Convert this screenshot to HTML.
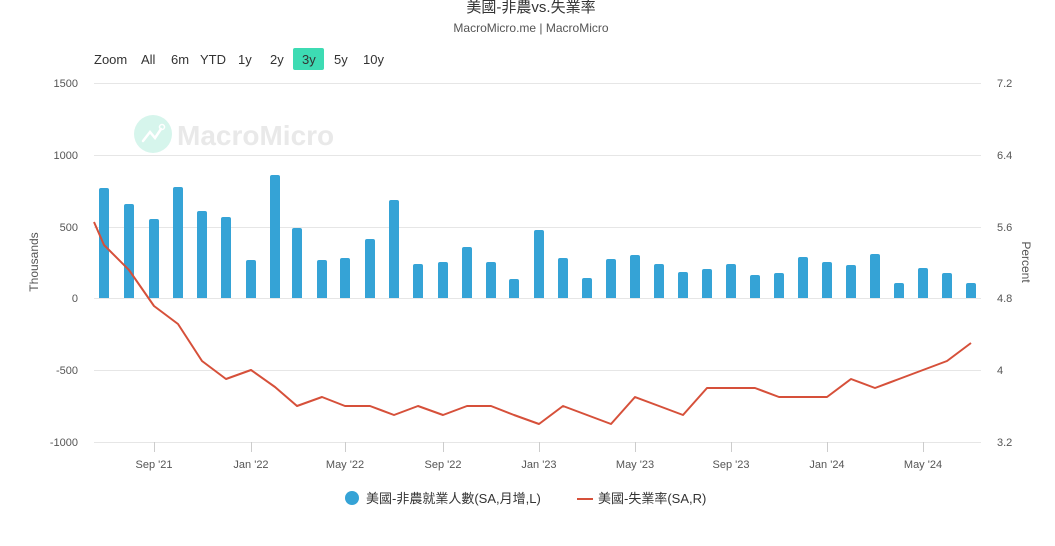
<!DOCTYPE html>
<html><head><meta charset="utf-8"><style>
html,body{margin:0;padding:0;background:#fff;width:1055px;height:546px;overflow:hidden}
svg{display:block;font-family:"Liberation Sans","Noto Sans CJK TC",sans-serif}
</style></head><body>
<svg width="1055" height="546" viewBox="0 0 1055 546" xmlns="http://www.w3.org/2000/svg">
<text x="531" y="12" text-anchor="middle" font-size="15" fill="#333">美國-非農vs.失業率</text>
<text x="531" y="32" text-anchor="middle" font-size="12" fill="#555">MacroMicro.me | MacroMicro</text>
<g font-size="13" fill="#333">
<text x="94" y="64">Zoom</text>
<text x="141" y="64">All</text>
<text x="171" y="64">6m</text>
<text x="200" y="64">YTD</text>
<text x="238" y="64">1y</text>
<text x="270" y="64">2y</text>
<rect x="293" y="48" width="31" height="22" rx="2" fill="#3ddbb3"/>
<text x="302" y="64">3y</text>
<text x="334" y="64">5y</text>
<text x="363" y="64">10y</text>
</g>
<g stroke="#e6e6e6" stroke-width="1">
<line x1="94" x2="981" y1="83.5" y2="83.5"/>
<line x1="94" x2="981" y1="155.5" y2="155.5"/>
<line x1="94" x2="981" y1="227.5" y2="227.5"/>
<line x1="94" x2="981" y1="298.5" y2="298.5"/>
<line x1="94" x2="981" y1="370.5" y2="370.5"/>
<line x1="94" x2="981" y1="442.5" y2="442.5"/>
</g>
<g stroke="#ccc">
<line x1="154.5" x2="154.5" y1="442" y2="452"/><line x1="251.5" x2="251.5" y1="442" y2="452"/>
<line x1="345.5" x2="345.5" y1="442" y2="452"/><line x1="443.5" x2="443.5" y1="442" y2="452"/>
<line x1="539.5" x2="539.5" y1="442" y2="452"/><line x1="635.5" x2="635.5" y1="442" y2="452"/>
<line x1="731.5" x2="731.5" y1="442" y2="452"/><line x1="827.5" x2="827.5" y1="442" y2="452"/>
<line x1="923.5" x2="923.5" y1="442" y2="452"/>
</g>
<circle cx="153" cy="134" r="19" fill="#d6f5ec"/>
<path d="M143 141 L150 132 L155 138 L161 129" stroke="#fff" stroke-width="2.5" fill="none" stroke-linecap="round"/>
<circle cx="162" cy="127" r="2.5" fill="none" stroke="#fff" stroke-width="1.5"/>
<text x="177" y="145" font-size="28" font-weight="bold" fill="#e9e9e9">MacroMicro</text>
<g id="bars" fill="#35a3d6"></g>
<g font-size="11" fill="#555" text-anchor="end">
<text x="78" y="87">1500</text><text x="78" y="159">1000</text><text x="78" y="231">500</text>
<text x="78" y="302">0</text><text x="78" y="374">-500</text><text x="78" y="446">-1000</text>
</g>
<g font-size="11" fill="#555">
<text x="997" y="87">7.2</text><text x="997" y="159">6.4</text><text x="997" y="231">5.6</text>
<text x="997" y="302">4.8</text><text x="997" y="374">4</text><text x="997" y="446">3.2</text>
</g>
<text transform="translate(38,262) rotate(-90)" text-anchor="middle" font-size="12" fill="#555">Thousands</text>
<text transform="translate(1022,262) rotate(90)" text-anchor="middle" font-size="12" fill="#555">Percent</text>
<g font-size="11" fill="#555" text-anchor="middle">
<text x="154" y="468">Sep '21</text><text x="251" y="468">Jan '22</text><text x="345" y="468">May '22</text>
<text x="443" y="468">Sep '22</text><text x="539" y="468">Jan '23</text><text x="635" y="468">May '23</text>
<text x="731" y="468">Sep '23</text><text x="827" y="468">Jan '24</text><text x="923" y="468">May '24</text>
</g>
<polyline fill="none" stroke="#d6503a" stroke-width="2" stroke-linejoin="round" points="94,222 104,245 129,270 154,306 178,324 202,361 226,379 251,370 275,387 297,406 322,397 345,406 370,406 394,415 418,406 443,415 467,406 491,406 514,415 539,424 563,406 587,415 611,424 635,397 659,406 683,415 707,388 731,388 755,388 779,397 803,397 827,397 851,379 875,388 899,379 923,370 947,361 971,343"/>
<circle cx="352" cy="498" r="7" fill="#35a3d6"/>
<text x="366" y="503" font-size="13" fill="#333">美國-非農就業人數(SA,月增,L)</text>
<line x1="577" x2="593" y1="499" y2="499" stroke="#d6503a" stroke-width="2"/>
<text x="598" y="503" font-size="13" fill="#333">美國-失業率(SA,R)</text>
</svg>
<script>
var c=[104,129,154,178,202,226,251,275,297,322,345,370,394,418,443,467,491,514,539,563,587,611,635,659,683,707,731,755,779,803,827,851,875,899,923,947,971];
var t=[188,204,219,187,211,217,260,175,228,260,258,239,200,264,262,247,262,279,230,258,278,259,255,264,272,269,264,275,273,257,262,265,254,283,268,273,283];
var g=document.getElementById('bars'),s='';
for(var i=0;i<c.length;i++){s+='<path d="M'+(c[i]-5)+' 298 V'+(t[i]+2)+' Q'+(c[i]-5)+' '+t[i]+' '+(c[i]-3)+' '+t[i]+' H'+(c[i]+3)+' Q'+(c[i]+5)+' '+t[i]+' '+(c[i]+5)+' '+(t[i]+2)+' V298 Z"/>';}
g.innerHTML=s;
</script>
</body></html>
